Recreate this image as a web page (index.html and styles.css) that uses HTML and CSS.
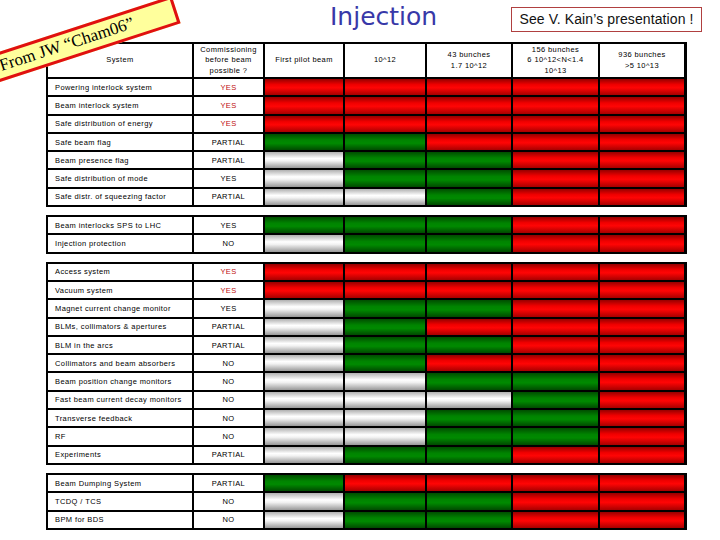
FILE: index.html
```html
<!DOCTYPE html>
<html>
<head>
<meta charset="utf-8">
<link rel="stylesheet" href="styles.css">
</head>
<body>
<div class="page">
  <div class="top">
    <h1 class="title">Injection</h1>
    <div class="see">See V. Kain’s presentation !</div>
  </div>

  <div class="groups">
    <div class="grp">
      <div class="hd">System</div>
      <div class="hd">Commissioning<br>before beam<br>possible ?</div>
      <div class="hd">First pilot beam</div>
      <div class="hd">10^12</div>
      <div class="hd">43 bunches<br>1.7 10^12</div>
      <div class="hd">156 bunches<br>6 10^12&lt;N&lt;1.4<br>10^13</div>
      <div class="hd">936 bunches<br>&gt;5 10^13</div>

      <div class="lb">Powering interlock system</div><div class="st red">YES</div><div class="r"></div><div class="r"></div><div class="r"></div><div class="r"></div><div class="r"></div>
      <div class="lb">Beam interlock system</div><div class="st red">YES</div><div class="r"></div><div class="r"></div><div class="r"></div><div class="r"></div><div class="r"></div>
      <div class="lb">Safe distribution of energy</div><div class="st red">YES</div><div class="r"></div><div class="r"></div><div class="r"></div><div class="r"></div><div class="r"></div>
      <div class="lb">Safe beam flag</div><div class="st">PARTIAL</div><div class="g"></div><div class="g"></div><div class="r"></div><div class="r"></div><div class="r"></div>
      <div class="lb">Beam presence flag</div><div class="st">PARTIAL</div><div class="w"></div><div class="g"></div><div class="g"></div><div class="r"></div><div class="r"></div>
      <div class="lb">Safe distribution of mode</div><div class="st">YES</div><div class="w"></div><div class="g"></div><div class="g"></div><div class="r"></div><div class="r"></div>
      <div class="lb">Safe distr. of squeezing factor</div><div class="st">PARTIAL</div><div class="w"></div><div class="w"></div><div class="g"></div><div class="r"></div><div class="r"></div>
    </div>

    <div class="grp">
      <div class="lb">Beam interlocks SPS to LHC</div><div class="st">YES</div><div class="g"></div><div class="g"></div><div class="g"></div><div class="r"></div><div class="r"></div>
      <div class="lb">Injection protection</div><div class="st">NO</div><div class="w"></div><div class="g"></div><div class="g"></div><div class="r"></div><div class="r"></div>
    </div>

    <div class="grp">
      <div class="lb">Access system</div><div class="st red">YES</div><div class="r"></div><div class="r"></div><div class="r"></div><div class="r"></div><div class="r"></div>
      <div class="lb">Vacuum system</div><div class="st red">YES</div><div class="r"></div><div class="r"></div><div class="r"></div><div class="r"></div><div class="r"></div>
      <div class="lb">Magnet current change monitor</div><div class="st">YES</div><div class="w"></div><div class="g"></div><div class="g"></div><div class="r"></div><div class="r"></div>
      <div class="lb">BLMs, collimators &amp; apertures</div><div class="st">PARTIAL</div><div class="w"></div><div class="g"></div><div class="r"></div><div class="r"></div><div class="r"></div>
      <div class="lb">BLM in the arcs</div><div class="st">PARTIAL</div><div class="w"></div><div class="g"></div><div class="g"></div><div class="r"></div><div class="r"></div>
      <div class="lb">Collimators and beam absorbers</div><div class="st">NO</div><div class="w"></div><div class="g"></div><div class="r"></div><div class="r"></div><div class="r"></div>
      <div class="lb">Beam position change monitors</div><div class="st">NO</div><div class="w"></div><div class="w"></div><div class="g"></div><div class="g"></div><div class="r"></div>
      <div class="lb">Fast beam current decay monitors</div><div class="st">NO</div><div class="w"></div><div class="w"></div><div class="w"></div><div class="g"></div><div class="r"></div>
      <div class="lb">Transverse feedback</div><div class="st">NO</div><div class="w"></div><div class="w"></div><div class="g"></div><div class="g"></div><div class="r"></div>
      <div class="lb">RF</div><div class="st">NO</div><div class="w"></div><div class="w"></div><div class="g"></div><div class="g"></div><div class="r"></div>
      <div class="lb">Experiments</div><div class="st">PARTIAL</div><div class="w"></div><div class="g"></div><div class="g"></div><div class="r"></div><div class="r"></div>
    </div>

    <div class="grp">
      <div class="lb">Beam Dumping System</div><div class="st">PARTIAL</div><div class="g"></div><div class="r"></div><div class="r"></div><div class="r"></div><div class="r"></div>
      <div class="lb">TCDQ / TCS</div><div class="st">NO</div><div class="w"></div><div class="g"></div><div class="g"></div><div class="r"></div><div class="r"></div>
      <div class="lb">BPM for BDS</div><div class="st">NO</div><div class="w"></div><div class="g"></div><div class="g"></div><div class="r"></div><div class="r"></div>
    </div>
  </div>

  <div class="banner">From JW “Cham06”</div>
</div>
</body>
</html>
```
FILE: styles.css
```css
html, body {
  margin: 0;
  padding: 0;
  background: #fff;
}
.page {
  position: relative;
  width: 720px;
  height: 540px;
  overflow: hidden;
  font-family: "Liberation Sans", Arial, sans-serif;
}
.top {
  display: flex;
  align-items: flex-start;
  height: 42px;
}
.title {
  margin: 2px 0 0 330px;
  font-family: "DejaVu Sans", sans-serif;
  font-weight: normal;
  font-size: 25px;
  line-height: 30px;
  color: #3838a8;
}
.see {
  margin: 7px 18px 0 auto;
  width: 191px;
  height: 25px;
  box-sizing: border-box;
  border: 1px solid #b04040;
  font-size: 14px;
  line-height: 23px;
  text-align: center;
  color: #111;
  letter-spacing: 0.1px;
}
.groups {
  display: flex;
  flex-direction: column;
  gap: 8px;
  margin-left: 46px;
  width: fit-content;
}
.grp {
  display: grid;
  grid-template-columns: 144px 69px 78px 80px 84px 85px 84px;
  grid-auto-rows: 16.3px;
  gap: 2px;
  padding: 2px 3px 2px 2px;
  background: #000;
}
.grp:first-child {
  grid-template-rows: 33px;
}
.hd, .lb, .st {
  background: #fff;
  font-size: 7.5px;
  letter-spacing: 0.4px;
  color: #000;
  display: flex;
  align-items: center;
}
.hd {
  justify-content: center;
  text-align: center;
  line-height: 10.5px;
}
.lb {
  padding-left: 7px;
}
.st {
  justify-content: center;
}
.st.red {
  color: #c01010;
}
.r {
  background: linear-gradient(to bottom, #960000 0%, #f00000 35%, #ff0505 55%, #a80000 100%);
}
.g {
  background: linear-gradient(to bottom, #004d00 0%, #008400 38%, #008a00 58%, #004a00 100%);
}
.w {
  background: linear-gradient(to bottom, #b0b0b0 0%, #ffffff 40%, #f2f2f2 55%, #989898 100%);
}
.banner {
  position: absolute;
  left: -40px;
  top: 66px;
  width: 232px;
  height: 29px;
  box-sizing: border-box;
  padding: 1px 0 3px 44px;
  border: 3px solid #e01010;
  background: #ffff9c;
  font-family: "Liberation Serif", "Times New Roman", serif;
  font-size: 17px;
  line-height: 19px;
  color: #000;
  white-space: nowrap;
  transform: rotate(-18deg);
  transform-origin: left bottom;
}
```
